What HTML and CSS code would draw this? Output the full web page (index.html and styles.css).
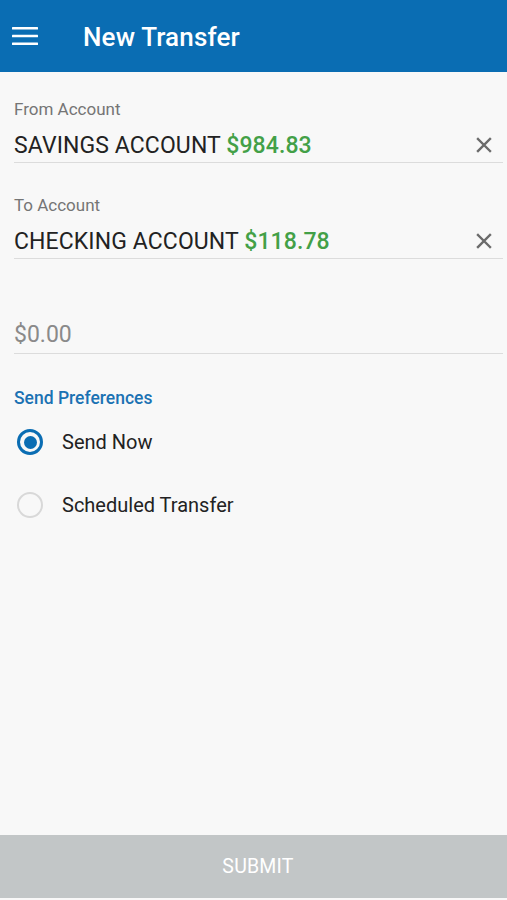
FILE: index.html
```html
<!DOCTYPE html>
<html lang="en">
<head>
  <meta charset="UTF-8">
  <meta name="viewport" content="width=device-width, initial-scale=1.0">
  <title>New Transfer</title>
  <link rel="stylesheet" href="styles.css">
</head>
<body>
<div class="app">
  <header class="toolbar">
    <button class="menu-btn" aria-label="Menu">
      <svg width="26" height="20" viewBox="0 0 26 20" fill="#ffffff">
        <rect x="0" y="1" width="26" height="2.6" rx="0.5"/>
        <rect x="0" y="8.7" width="26" height="2.6" rx="0.5"/>
        <rect x="0" y="16.4" width="26" height="2.6" rx="0.5"/>
      </svg>
    </button>
    <h1>New Transfer</h1>
  </header>

  <main class="content">
    <div class="field">
      <label>From Account</label>
      <div class="field-value">
        <span class="account">SAVINGS ACCOUNT <span class="balance">$984.83</span></span>
        <button class="clear-btn" aria-label="Clear">
          <svg width="16" height="16" viewBox="0 0 16 16">
            <path d="M2 2 L14 14 M14 2 L2 14" stroke="#6b6b6b" stroke-width="2.4" stroke-linecap="square"/>
          </svg>
        </button>
      </div>
    </div>

    <div class="field">
      <label>To Account</label>
      <div class="field-value">
        <span class="account">CHECKING ACCOUNT <span class="balance">$118.78</span></span>
        <button class="clear-btn" aria-label="Clear">
          <svg width="16" height="16" viewBox="0 0 16 16">
            <path d="M2 2 L14 14 M14 2 L2 14" stroke="#6b6b6b" stroke-width="2.4" stroke-linecap="square"/>
          </svg>
        </button>
      </div>
    </div>

    <div class="amount">
      <input type="text" placeholder="$0.00">
    </div>

    <h2 class="section-title">Send Preferences</h2>

    <div class="radio-list">
      <label class="radio">
        <span class="radio-mark checked"></span>
        Send Now
      </label>
      <label class="radio">
        <span class="radio-mark"></span>
        Scheduled Transfer
      </label>
    </div>
  </main>

  <button class="submit-btn" disabled>SUBMIT</button>
</div>
</body>
</html>
```

FILE: styles.css
```css
:root {
  --primary: #0a6db3;
  --text: #222222;
  --muted: #757575;
  --green: #43a047;
  --bg: #f8f8f8;
  --line: #dcdcdc;
}

* {
  box-sizing: border-box;
  margin: 0;
  padding: 0;
  font-family: Roboto, 'Noto Sans', sans-serif;
}

body {
  background: var(--bg);
  color: var(--text);
}

.app {
  height: 900px;
  display: flex;
  flex-direction: column;
}

.toolbar {
  height: 72px;
  background: var(--primary);
  display: flex;
  align-items: center;
  padding-left: 12px;
  flex-shrink: 0;
}

.menu-btn {
  background: none;
  border: none;
  display: flex;
  width: 26px;
  height: 20px;
  margin-top: -1px;
  cursor: pointer;
}

.toolbar h1 {
  color: #ffffff;
  font-size: 26px;
  font-weight: 500;
  margin-left: 45px;
  margin-top: 1px;
  letter-spacing: 0.15px;
}

.content {
  flex: 1;
  padding: 0 4px 0 14px;
}

.field {
  padding-top: 27px;
}

.field + .field {
  padding-top: 32px;
}

.field label {
  display: block;
  font-size: 17px;
  color: var(--muted);
  line-height: 20px;
}

.field-value {
  display: flex;
  align-items: center;
  justify-content: space-between;
  height: 44px;
  padding-top: 10px;
  border-bottom: 1px solid var(--line);
}

.account {
  font-size: 23px;
  color: var(--text);
  letter-spacing: 0.1px;
}

.balance {
  color: var(--green);
  font-weight: 500;
}

.clear-btn {
  background: none;
  border: none;
  display: flex;
  margin-right: 11px;
  margin-top: -1px;
  cursor: pointer;
}

.amount {
  margin-top: 57px;
  border-bottom: 1px solid var(--line);
}

.amount input {
  width: 100%;
  border: none;
  background: transparent;
  font-size: 23px;
  height: 37px;
  padding: 0;
  color: var(--text);
  outline: none;
}

.amount input::placeholder {
  color: #8a8a8a;
}

.section-title {
  font-size: 17.5px;
  font-weight: 500;
  color: #1b72b3;
  margin-top: 33px;
  line-height: 22px;
}

.radio-list {
  display: flex;
  flex-direction: column;
  gap: 37px;
  margin-top: 20px;
}

.radio {
  display: flex;
  align-items: center;
  gap: 19px;
  font-size: 20px;
  color: var(--text);
  height: 26px;
  padding-left: 3px;
}

.radio-mark {
  width: 26px;
  height: 26px;
  border-radius: 50%;
  border: 2px solid #d8d8d8;
  flex-shrink: 0;
  display: flex;
  align-items: center;
  justify-content: center;
}

.radio-mark.checked {
  border: 3px solid #0a6db3;
}

.radio-mark.checked::after {
  content: '';
  width: 13px;
  height: 13px;
  border-radius: 50%;
  background: #0a6db3;
}

.submit-btn {
  height: 63px;
  margin-bottom: 2px;
  background: #c2c6c7;
  border: none;
  color: #ffffff;
  font-size: 19.5px;
  letter-spacing: 0.2px;
  padding-left: 9px;
  flex-shrink: 0;
}
```
